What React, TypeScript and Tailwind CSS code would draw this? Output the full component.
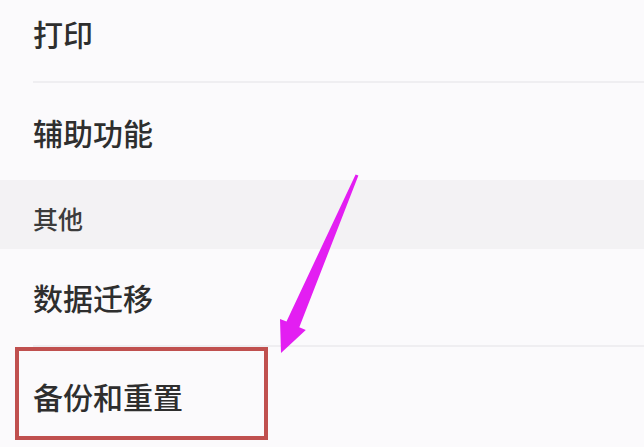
import React from "react";

const font = { fontFamily: '"Noto Sans CJK SC", "Noto Sans", sans-serif' };

function Row({ label, h }: { label: string; h: string }) {
  return (
    <div className={`flex items-center pl-[33px] ${h}`}>
      <span className="text-[30px] font-medium leading-none text-[#2e2e2e]">{label}</span>
    </div>
  );
}

export default function App() {
  return (
    <div
      className="relative w-[644px] h-[447px] overflow-hidden bg-[#fbfafc]"
      style={font}
    >
      <div className="-mt-[16px] flex flex-col">
        <Row label="打印" h="h-[97px]" />
        <div className="ml-[33px] h-[2px] bg-[#efeef1]" />
        <Row label="辅助功能" h="h-[97px]" />
        <div className="flex h-[69px] items-center bg-[#f3f2f4] pl-[33px] pt-[8px]">
          <span className="text-[25px] font-medium leading-none text-[#3c3c3c]">其他</span>
        </div>
        <Row label="数据迁移" h="h-[96px]" />
        <div className="ml-[33px] h-[2px] bg-[#efeef1]" />
        <div className="relative flex h-[98px] items-center pl-[33px]">
          <span className="text-[30px] font-medium leading-none text-[#2e2e2e]">备份和重置</span>
          <div className="absolute left-[15px] top-0 h-[93px] w-[253px] border-[4px] border-[#c0504f]" />
        </div>
      </div>
      <svg
        className="absolute left-0 top-0"
        width="644"
        height="447"
        viewBox="0 0 644 447"
      >
        <path
          d="M355.6 174.4 L358.4 175.6 L299.3 327.2 L305.8 330 L281 353 L280 318.9 L286.5 321.6 Z"
          fill="#e31ef2"
        />
      </svg>
    </div>
  );
}
